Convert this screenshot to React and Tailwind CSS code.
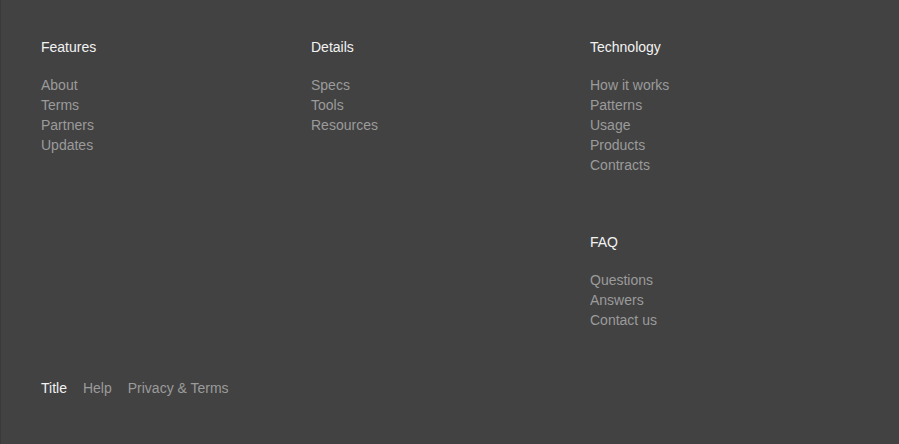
export default function App() {
  const Col = ({ title, links }) => (
    <div>
      <h3 className="text-[14px] leading-[20px] text-[#f2f2f2]">{title}</h3>
      <ul className="mt-[18px] text-[14px] leading-[20px] text-[#9b9b9b]">
        {links.map((l) => (
          <li key={l}>{l}</li>
        ))}
      </ul>
    </div>
  );
  return (
    <div
      className="min-h-[444px] w-full bg-[#424242] border-l border-[#3a3a3a] pl-[40px] pt-[37px]"
      style={{ fontFamily: '"Liberation Sans", Arial, sans-serif' }}
    >
      <div className="grid grid-cols-[270px_279px_1fr]">
        <Col title="Features" links={["About", "Terms", "Partners", "Updates"]} />
        <Col title="Details" links={["Specs", "Tools", "Resources"]} />
        <div className="flex flex-col gap-[57px]">
          <Col title="Technology" links={["How it works", "Patterns", "Usage", "Products", "Contracts"]} />
          <Col title="FAQ" links={["Questions", "Answers", "Contact us"]} />
        </div>
      </div>
      <div className="mt-[48px] flex gap-[16px] text-[14px] leading-[20px]">
        <span className="text-[#f2f2f2]">Title</span>
        <span className="text-[#9b9b9b]">Help</span>
        <span className="text-[#9b9b9b]">Privacy &amp; Terms</span>
      </div>
    </div>
  );
}
